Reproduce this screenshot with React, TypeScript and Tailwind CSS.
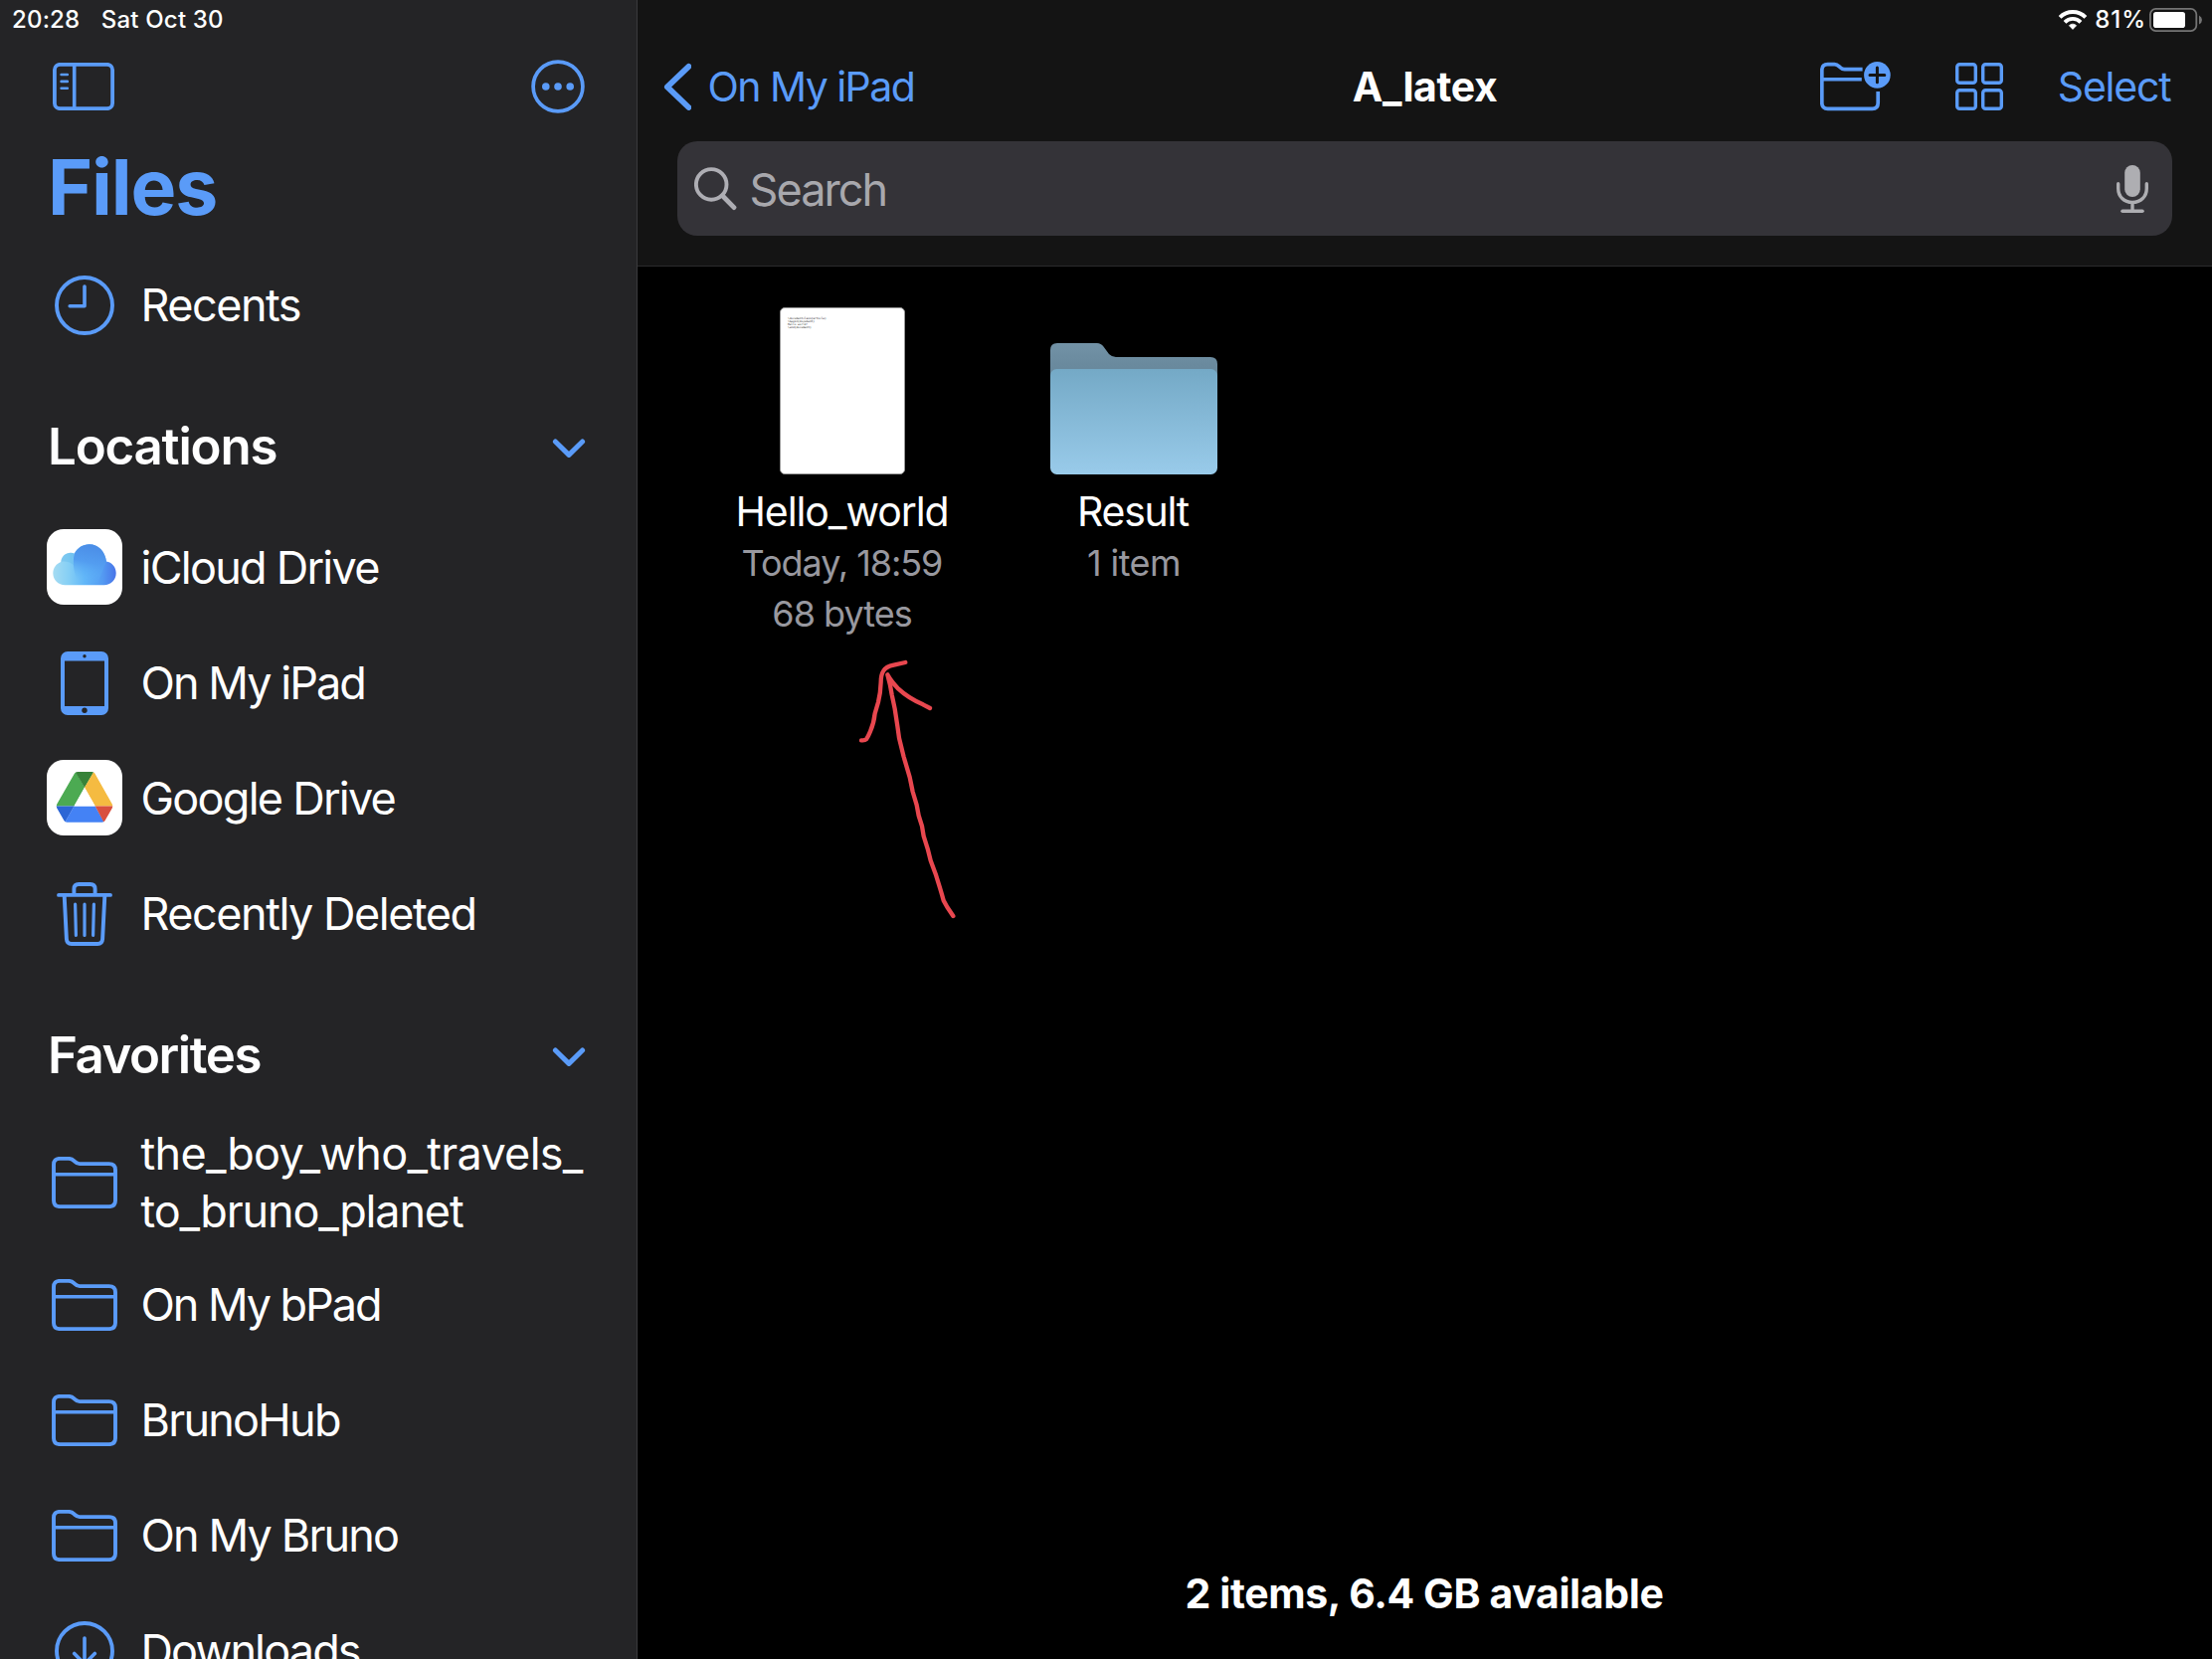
import type { ReactNode } from 'react'

const BLUE = '#5a9bf8'

function SidebarToggleIcon() {
  return (
    <svg width="62" height="48" viewBox="0 0 62 48" fill="none" stroke={BLUE} strokeLinecap="round">
      <rect x="1.9" y="1.8" width="58.2" height="44.4" rx="5.5" strokeWidth="3.8" />
      <path d="M21.7 2V46" strokeWidth="3.6" strokeLinecap="butt" />
      <path d="M8.6 12H14.8M8.6 18.9H14.8M8.6 25.8H14.8" strokeWidth="2.6" />
    </svg>
  )
}

function EllipsisIcon() {
  return (
    <svg width="54" height="54" viewBox="0 0 54 54" fill="none">
      <circle cx="27" cy="27" r="24.9" stroke={BLUE} strokeWidth="3.7" />
      <g fill={BLUE}>
        <circle cx="14.8" cy="27" r="3.8" />
        <circle cx="27" cy="27" r="3.8" />
        <circle cx="39.2" cy="27" r="3.8" />
      </g>
    </svg>
  )
}

function ClockIcon() {
  return (
    <svg width="60" height="60" viewBox="0 0 60 60" fill="none" stroke={BLUE} strokeLinecap="round" strokeLinejoin="round">
      <circle cx="30" cy="30" r="28" strokeWidth="3.9" />
      <path d="M30 11V30.8H15.2" strokeWidth="3.6" />
    </svg>
  )
}

function DownloadIcon() {
  return (
    <svg width="60" height="60" viewBox="0 0 60 60" fill="none" stroke={BLUE} strokeLinecap="round" strokeLinejoin="round">
      <circle cx="30" cy="30" r="28" strokeWidth="3.9" />
      <path d="M30 17V43M19.7 32.5L30 43L40.3 32.5" strokeWidth="3.6" />
    </svg>
  )
}

function ChevronDown() {
  return (
    <svg width="34" height="20" viewBox="0 0 34 20" fill="none" stroke={BLUE} strokeWidth="5" strokeLinecap="round" strokeLinejoin="round">
      <path d="M3.4 3L17 16.4L30.6 3" />
    </svg>
  )
}

function FolderIcon() {
  return (
    <svg width="66" height="52" viewBox="0 0 66 52" fill="none" stroke={BLUE} strokeWidth="3.9">
      <path d="M8 1.9H17C19.6 1.9 20.8 2.6 22.4 4.2C24.2 6 25.2 7.1 28 7.1H57.6C61.8 7.1 64 9.2 64 13.2V44C64 48 61.8 50.1 57.6 50.1H8.4C4.2 50.1 2 48 2 44V8C2 4 4 1.9 8 1.9Z" />
      <path d="M2 17.7H64" strokeWidth="3.5" />
    </svg>
  )
}

function CloudIcon() {
  return (
    <svg width="76" height="76" viewBox="0 0 76 76">
      <defs>
        <linearGradient id="cloudBase" x1="6" y1="0" x2="70" y2="0" gradientUnits="userSpaceOnUse">
          <stop offset="0" stopColor="#a6dcf2" />
          <stop offset="0.25" stopColor="#86cff5" />
          <stop offset="0.5" stopColor="#62b7f8" />
          <stop offset="0.78" stopColor="#549bf2" />
          <stop offset="1" stopColor="#4873e8" />
        </linearGradient>
        <linearGradient id="cloudTop" x1="46" y1="15" x2="38" y2="52" gradientUnits="userSpaceOnUse">
          <stop offset="0" stopColor="#4a8ce6" />
          <stop offset="0.5" stopColor="#539df0" />
          <stop offset="1" stopColor="#5fb6f8" stopOpacity="0" />
        </linearGradient>
      </defs>
      <rect width="76" height="76" rx="17" fill="#ffffff" />
      <path
        fill="url(#cloudBase)"
        d="M18.4 56.3C11.5 56.3 6.3 51 6.3 44.3C6.3 38.8 9.8 34.4 14.3 32.9C14.7 27.6 18.8 23.8 24 23.8C25.4 23.8 26.7 24.1 27.9 24.6C30.6 19.1 36.2 15.3 42.8 15.3C51.6 15.3 58.7 22 59.9 32.6C65.6 33.5 69.7 38.3 69.7 44.3C69.7 51 64.4 56.3 57.6 56.3Z"
      />
      <path
        fill="url(#cloudTop)"
        d="M27.9 24.6C30.6 19.1 36.2 15.3 42.8 15.3C51.6 15.3 58.7 22 59.9 32.6C56 40 54 50 50 56.3H34C28 50 25 34 27.9 24.6Z"
      />
      <path fill="#5cb4e8" fillOpacity="0.35" d="M14.3 32.9C14.7 27.6 18.8 23.8 24 23.8C25.4 23.8 26.7 24.1 27.9 24.6C26.3 28 26 32 27.2 36C23 32.6 18.2 31.8 14.3 32.9Z" />
    </svg>
  )
}

function TabletIcon() {
  return (
    <svg className="mt-[2px]" width="48" height="64" viewBox="0 0 48 64">
      <path
        fill={BLUE}
        fillRule="evenodd"
        d="M7 0H41A7 7 0 0 1 48 7V57A7 7 0 0 1 41 64H7A7 7 0 0 1 0 57V7A7 7 0 0 1 7 0ZM4 9.4V55H44V9.4Z"
      />
      <circle cx="24" cy="4.8" r="1.7" fill="#242426" />
      <circle cx="24" cy="59.3" r="2.7" fill="#242426" />
    </svg>
  )
}

function GoogleDriveIcon() {
  return (
    <svg width="76" height="76" viewBox="0 0 76 76">
      <defs>
        <clipPath id="driveShape">
          <path d="M31 12H45.4Q47.4 12 48.3 13.6L65.8 44.6Q66.8 46.5 65.8 48.4L58.6 61Q57.6 62.7 55.6 62.7H20.4Q18.4 62.7 17.4 61L10.2 48.4Q9.2 46.5 10.2 44.6L28 13.6Q29 12 31 12Z" />
        </clipPath>
      </defs>
      <rect width="76" height="76" rx="17" fill="#ffffff" />
      <g clipPath="url(#driveShape)">
        <path fill="#4caa52" d="M28.5 11L38 27.7L27.5 46.5H8Z" />
        <path fill="#378339" d="M28 11H48L38 27.9Z" />
        <path fill="#f5bb41" d="M47.8 11L68 46.5H48.7L38 27.7Z" />
        <path fill="#2c66d5" d="M8 46.4H27.6L18 63.5Z" />
        <path fill="#4482f5" d="M27.5 46.4H48.7L58.2 63.5H17.8Z" />
        <path fill="#d9503f" d="M48.7 46.4H68L57.8 63.5Z" />
      </g>
      <path fill="#ffffff" d="M38 27.7L48.7 46.4H27.5Z" />
    </svg>
  )
}

function TrashIcon() {
  return (
    <svg className="mt-[2px]" width="56" height="64" viewBox="0 0 56 64" fill="none" stroke={BLUE} strokeLinecap="round" strokeLinejoin="round">
      <path d="M2 12.9H54" strokeWidth="3.9" />
      <path d="M17.4 12V6.8Q17.4 2 22.2 2H33.8Q38.6 2 38.6 6.8V12" strokeWidth="3.9" />
      <path d="M7.7 14L9.9 57.2Q10.2 62 14.8 62H41.2Q45.8 62 46.1 57.2L48.3 14" strokeWidth="3.9" />
      <path d="M18.6 22.2L19.4 53.4M28 22.2V53.4M37.4 22.2L36.6 53.4" strokeWidth="3.2" />
    </svg>
  )
}

function WifiIcon() {
  return (
    <svg width="28" height="20" viewBox="0 0 28 20" fill="none" stroke="#ffffff" className="overflow-visible">
      <path d="M1.1 7.4A18.1 18.1 0 0 1 26.9 7.4" strokeWidth="3.9" />
      <path d="M6 12.3A11.2 11.2 0 0 1 22 12.3" strokeWidth="3.8" />
      <path d="M14 19.4L10.4 15.7A5 5 0 0 1 17.6 15.7Z" fill="#ffffff" strokeWidth="0.8" strokeLinejoin="round" />
    </svg>
  )
}

function BatteryIcon() {
  return (
    <svg width="54" height="24" viewBox="0 0 54 24" fill="none">
      <rect x="0.9" y="0.9" width="46.4" height="22.2" rx="5.6" stroke="#747474" strokeWidth="1.8" />
      <rect x="4" y="4" width="32" height="16" rx="2.8" fill="#ffffff" />
      <path d="M50 7.4Q53 9 53 12T50 16.6Z" fill="#747474" />
    </svg>
  )
}

function NewFolderIcon() {
  return (
    <svg width="72" height="52" viewBox="10 61 72 52" fill="none" stroke={BLUE} strokeWidth="3.7">
      <path d="M52.6 69.7H34.6C32.4 69.7 31.6 69 30 67.6C28 65.8 27 64.7 24.4 64.7H17.6C13.8 64.7 11.8 66.8 11.8 70.6V103.4C11.8 107.2 13.8 109.3 17.6 109.3H62.4C66.2 109.3 68.2 107.2 68.2 103.4V92" />
      <path d="M11.8 79.7H51.8" strokeWidth="3.4" />
      <circle cx="67.4" cy="75.4" r="13.3" fill={BLUE} stroke="none" />
      <path d="M67.4 68V82.8M60 75.4H74.8" stroke="#141414" strokeWidth="3" strokeLinecap="round" />
    </svg>
  )
}

function GridIcon() {
  return (
    <svg width="48" height="48" viewBox="0 0 48 48" fill="none" stroke={BLUE} strokeWidth="3.4">
      <rect x="1.7" y="1.7" width="18.6" height="18.6" rx="2.6" />
      <rect x="27.7" y="1.7" width="18.6" height="18.6" rx="2.6" />
      <rect x="1.7" y="27.7" width="18.6" height="18.6" rx="2.6" />
      <rect x="27.7" y="27.7" width="18.6" height="18.6" rx="2.6" />
    </svg>
  )
}

function SearchIcon() {
  return (
    <svg width="43" height="44" viewBox="0 0 43 44" fill="none" stroke="#aeaeb4" strokeLinecap="round">
      <circle cx="17.2" cy="17.4" r="15.3" strokeWidth="3.9" />
      <path d="M28.6 29L40 40.6" strokeWidth="4.8" />
    </svg>
  )
}

function MicIcon() {
  return (
    <svg width="32" height="48" viewBox="0 0 32 48" fill="none" stroke="#aeaeb2" strokeLinecap="round">
      <rect x="8.2" y="0" width="15.6" height="32" rx="7.8" fill="#aeaeb2" stroke="none" />
      <path d="M1.7 18.8V23.4C1.7 31.6 7.6 37.4 16 37.4S30.3 31.6 30.3 23.4V18.8" strokeWidth="3.4" />
      <path d="M16 38V46" strokeWidth="3.4" strokeLinecap="butt" />
      <path d="M6 46.2H26" strokeWidth="3.5" />
    </svg>
  )
}

function FolderArtwork() {
  return (
    <svg width="168" height="132" viewBox="0 0 168 132">
      <defs>
        <linearGradient id="folderBack" x1="0" y1="0" x2="0" y2="1">
          <stop offset="0" stopColor="#7292a6" />
          <stop offset="0.4" stopColor="#69899d" />
        </linearGradient>
        <linearGradient id="folderFront" x1="0" y1="0" x2="0" y2="1">
          <stop offset="0" stopColor="#74a9c6" />
          <stop offset="1" stopColor="#99cbea" />
        </linearGradient>
      </defs>
      <path fill="url(#folderBack)" d="M7 0H47Q51 0 53.5 3.6L59 11Q62 14 66 14H161Q168 14 168 21V60H0V7Q0 0 7 0Z" />
      <rect y="26" width="168" height="106" rx="6.5" fill="url(#folderFront)" />
    </svg>
  )
}

function DocumentArtwork() {
  return (
    <div className="h-[168px] w-[126px] rounded-[5px] border border-[#9a9a9a] bg-white pt-[9px] pl-[7px] font-['DejaVu_Sans_Mono',monospace] text-[2.8px] leading-[3.1px] text-[#222]">
      <div>{'\\documentclass{article}'}</div>
      <div>{'\\begin{document}'}</div>
      <div>Hello world!</div>
      <div>{'\\end{document}'}</div>
    </div>
  )
}

function HandDrawnArrow() {
  return (
    <svg
      className="pointer-events-none absolute top-[650px] left-[199px]"
      width="140"
      height="290"
      viewBox="0 0 420 870"
      fill="none"
      stroke="#e8474f"
      strokeWidth="13"
      strokeLinecap="round"
      strokeLinejoin="round"
    >
      <path d="M211 48L176 56Q152 61 145 73Q137 85 137 108Q136 140 129 168L119 202Q116 232 105 256Q98 273 93 280Q89 284 78 283" />
      <path d="M285 186L264 175Q220 156 190 128Q168 105 157 85Q166 116 170 145L179 188L187 240L192 276L206 333L224 394L233 438L245 478L251 510L261 542L266 572L278 610L287 646L302 686L315 728L321 748L326 766L337 786L355 813" />
    </svg>
  )
}

function SidebarRow({ icon, label, text, tall = false }: { icon: ReactNode; label: ReactNode; text: string; tall?: boolean }) {
  return (
    <li className={`flex shrink-0 items-center pl-[47px] ${tall ? 'h-[130px]' : 'h-[116px]'}`}>
      <span className="flex w-[76px] shrink-0 items-center justify-center">{icon}</span>
      <span className={`ml-[18.5px] text-[45px] leading-[58px] whitespace-nowrap ${text}`}>{label}</span>
    </li>
  )
}

function SectionHeading({ label, className }: { label: string; className: string }) {
  return (
    <div className={`flex shrink-0 items-center justify-between pr-[51px] pl-[48px] ${className}`}>
      <h2 className="text-[51px] leading-none font-semibold">{label}</h2>
      <span className="pt-[5px]">
        <ChevronDown />
      </span>
    </div>
  )
}

function Sidebar() {
  return (
    <aside className="flex h-full w-[640px] shrink-0 flex-col overflow-hidden bg-[#242426]">
      <div className="flex h-[40px] shrink-0 items-center gap-[21.5px] pl-[12px] text-[24px] leading-none font-medium tracking-[0.18px]">
        <span>20:28</span>
        <span>Sat Oct 30</span>
      </div>
      <div className="flex h-[94px] shrink-0 items-center justify-between pr-[52.5px] pl-[53px]">
        <SidebarToggleIcon />
        <EllipsisIcon />
      </div>
      <h1 className="mb-[7px] flex h-[108px] shrink-0 items-center pl-[48px] text-[77px] leading-none font-bold tracking-[-1.15px] text-[#5a9bf8]">
        Files
      </h1>
      <ul>
        <SidebarRow icon={<ClockIcon />} label="Recents" text="tracking-[-1.5px]" />
      </ul>
      <SectionHeading label="Locations" className="h-[147px] pt-[20px] tracking-[-1.19px]" />
      <ul>
        <SidebarRow icon={<CloudIcon />} label="iCloud Drive" text="pt-[2px] tracking-[-1.75px]" />
        <SidebarRow icon={<TabletIcon />} label="On My iPad" text="pt-[2px] tracking-[-1.95px]" />
        <SidebarRow icon={<GoogleDriveIcon />} label="Google Drive" text="pt-[2px] tracking-[-1.75px]" />
        <SidebarRow icon={<TrashIcon />} label="Recently Deleted" text="pt-[2px] tracking-[-1.48px]" />
      </ul>
      <SectionHeading label="Favorites" className="h-[148px] pt-[21px] tracking-[-1.48px]" />
      <ul className="flex flex-col">
        <SidebarRow
          tall
          icon={<FolderIcon />}
          label={
            <>
              the_boy_who_travels_
              <br />
              <span className="tracking-[-1.15px]">to_bruno_planet</span>
            </>
          }
          text="tracking-[-0.72px]"
        />
        <SidebarRow icon={<FolderIcon />} label="On My bPad" text="tracking-[-2.06px]" />
        <SidebarRow icon={<FolderIcon />} label="BrunoHub" text="tracking-[-1.74px]" />
        <SidebarRow icon={<FolderIcon />} label="On My Bruno" text="tracking-[-1.86px]" />
        <SidebarRow icon={<DownloadIcon />} label="Downloads" text="tracking-[-1.86px]" />
      </ul>
    </aside>
  )
}

function Header() {
  return (
    <header className="flex h-[268px] shrink-0 flex-col border-b border-[#2b2b2d] bg-[#141414]">
      <div className="flex h-[40px] items-center justify-end pr-[9px] text-[24px] leading-none font-medium">
        <WifiIcon />
        <span className="ml-[8px] tracking-[0.97px]">81%</span>
        <span className="ml-[3px]">
          <BatteryIcon />
        </span>
      </div>
      <div className="grid h-[94px] grid-cols-[1fr_auto_1fr] items-center text-[41px] leading-none">
        <div className="flex items-center pl-[26px] text-[#5a9bf8]">
          <svg width="28" height="48" viewBox="0 0 28 48" fill="none" stroke={BLUE} strokeWidth="5.8" strokeLinecap="round" strokeLinejoin="round">
            <path d="M25.4 3.8L3.9 24.4L25.4 45" />
          </svg>
          <span className="ml-[16.5px] pt-px tracking-[-1.54px]">On My iPad</span>
        </div>
        <h2 className="pt-px font-[650] tracking-[-0.4px]">A_latex</h2>
        <div className="flex items-center justify-end pr-[41.5px] text-[#5a9bf8]">
          <NewFolderIcon />
          <span className="ml-[64px]">
            <GridIcon />
          </span>
          <span className="ml-[55px] pt-px tracking-[-1.2px]">Select</span>
        </div>
      </div>
      <div className="mx-[40px] mt-[8px] flex h-[95px] items-center rounded-[20px] bg-[#343338] pr-[24px] pl-[17px]">
        <SearchIcon />
        <span className="ml-[12.5px] pt-px text-[45px] leading-none tracking-[-1.94px] text-[#a8a8ad]">Search</span>
        <span className="ml-auto">
          <MicIcon />
        </span>
      </div>
    </header>
  )
}

function FileTile({ artwork, children }: { artwork: ReactNode; children: ReactNode }) {
  return (
    <div className="flex w-[293px] flex-col items-center text-[36px] leading-[51.5px] text-[#98989f]">
      <div className="mb-[12px] flex h-[168px] items-end">{artwork}</div>
      {children}
    </div>
  )
}

export default function App() {
  return (
    <div className="flex h-[1668px] w-[2224px] overflow-hidden bg-black font-[Inter,sans-serif] text-white">
      <Sidebar />
      <main className="relative flex flex-1 flex-col border-l border-[#3a3a3c]">
        <Header />
        <section className="flex flex-1 pt-[41px] pl-[59.5px]">
          <FileTile artwork={<DocumentArtwork />}>
            <div className="pr-px text-[41px] tracking-[-1.08px] text-white">Hello_world</div>
            <div className="pr-px tracking-[-1.05px]">Today, 18:59</div>
            <div className="pr-px tracking-[-0.98px]">68 bytes</div>
          </FileTile>
          <FileTile artwork={<FolderArtwork />}>
            <div className="pr-[2px] text-[41px] tracking-[-1.28px] text-white">Result</div>
            <div className="tracking-[-0.58px]">1 item</div>
          </FileTile>
        </section>
        <footer className="flex h-[132px] shrink-0 items-center justify-center pr-px text-[41px] leading-none font-[650] tracking-[-0.4px]">
          2 items, 6.4 GB available
        </footer>
        <HandDrawnArrow />
      </main>
    </div>
  )
}
